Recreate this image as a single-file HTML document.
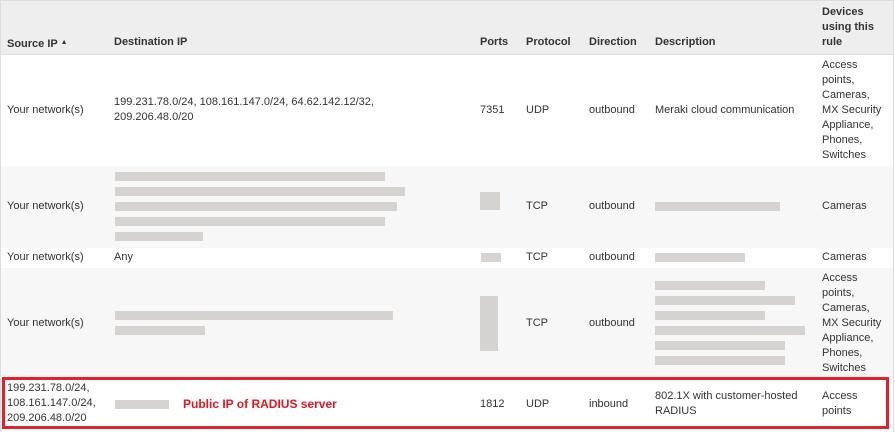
<!DOCTYPE html>
<html><head><style>
body{margin:0;width:895px;height:432px;background:#fff;font-family:"Liberation Sans",Arial,sans-serif;font-size:11px;color:#333;position:relative;overflow:hidden}
.a{position:absolute;line-height:15px;white-space:nowrap}
.h{font-weight:bold}
.bg{position:absolute;left:0;width:893px}
.b{position:absolute;height:9px;background:#cfcbc9;opacity:.85}
</style></head><body>
<div class="bg" style="top:0;height:55px;background:#eee;border-top:1px solid #ddd;border-bottom:1px solid #ddd;box-sizing:border-box"></div>
<div class="bg" style="top:166px;height:82px;background:#f7f7f7"></div>
<div class="bg" style="top:268px;height:109px;background:#f7f7f7"></div>
<div style="position:absolute;left:0;top:0;width:1px;height:432px;background:#ddd"></div>
<div style="position:absolute;left:893px;top:0;width:1px;height:432px;background:#ddd"></div>

<div class="a h" style="left:7px;top:35px">Source IP <span style="font-size:7px;vertical-align:3px">▲</span></div>
<div class="a h" style="left:114px;top:35px">Destination IP</div>
<div class="a h" style="left:480px;top:35px">Ports</div>
<div class="a h" style="left:526px;top:35px">Protocol</div>
<div class="a h" style="left:589px;top:35px">Direction</div>
<div class="a h" style="left:655px;top:35px">Description</div>
<div class="a h" style="left:822px;top:5px">Devices<br>using this<br>rule</div>

<div class="a" style="left:7px;top:103px">Your network(s)</div>
<div class="a" style="left:114px;top:95px">199.231.78.0/24, 108.161.147.0/24, 64.62.142.12/32,<br>209.206.48.0/20</div>
<div class="a" style="left:480px;top:103px">7351</div>
<div class="a" style="left:526px;top:103px">UDP</div>
<div class="a" style="left:589px;top:103px">outbound</div>
<div class="a" style="left:655px;top:103px">Meraki cloud communication</div>
<div class="a" style="left:822px;top:58px">Access<br>points,<br>Cameras,<br>MX Security<br>Appliance,<br>Phones,<br>Switches</div>

<div class="a" style="left:7px;top:199px">Your network(s)</div>
<div class="b" style="left:115px;top:172px;width:270px"></div>
<div class="b" style="left:115px;top:187px;width:290px"></div>
<div class="b" style="left:115px;top:202px;width:282px"></div>
<div class="b" style="left:115px;top:217px;width:270px"></div>
<div class="b" style="left:115px;top:232px;width:88px"></div>
<div class="b" style="left:480px;top:192px;width:20px;height:18px"></div>
<div class="a" style="left:526px;top:199px">TCP</div>
<div class="a" style="left:589px;top:199px">outbound</div>
<div class="b" style="left:655px;top:202px;width:125px"></div>
<div class="a" style="left:822px;top:199px">Cameras</div>

<div class="a" style="left:7px;top:250px">Your network(s)</div>
<div class="a" style="left:114px;top:250px">Any</div>
<div class="b" style="left:481px;top:253px;width:20px"></div>
<div class="a" style="left:526px;top:250px">TCP</div>
<div class="a" style="left:589px;top:250px">outbound</div>
<div class="b" style="left:655px;top:253px;width:90px"></div>
<div class="a" style="left:822px;top:250px">Cameras</div>

<div class="a" style="left:7px;top:316px">Your network(s)</div>
<div class="b" style="left:115px;top:311px;width:278px"></div>
<div class="b" style="left:115px;top:326px;width:90px"></div>
<div class="b" style="left:480px;top:296px;width:18px;height:55px"></div>
<div class="a" style="left:526px;top:316px">TCP</div>
<div class="a" style="left:589px;top:316px">outbound</div>
<div class="b" style="left:655px;top:281px;width:110px"></div>
<div class="b" style="left:655px;top:296px;width:140px"></div>
<div class="b" style="left:655px;top:311px;width:110px"></div>
<div class="b" style="left:655px;top:326px;width:150px"></div>
<div class="b" style="left:655px;top:341px;width:130px"></div>
<div class="b" style="left:655px;top:356px;width:130px"></div>
<div class="a" style="left:822px;top:271px">Access<br>points,<br>Cameras,<br>MX Security<br>Appliance,<br>Phones,<br>Switches</div>

<div style="position:absolute;left:2px;top:377px;width:881px;height:46px;border:3px solid #e3202b"></div>
<div class="a" style="left:7px;top:381px">199.231.78.0/24,<br>108.161.147.0/24,<br>209.206.48.0/20</div>
<div class="b" style="left:115px;top:400px;width:54px"></div>
<div class="a" style="left:183px;top:397px;color:#e8141e;font-weight:bold;font-size:12px">Public IP of RADIUS server</div>
<div class="a" style="left:480px;top:397px">1812</div>
<div class="a" style="left:526px;top:397px">UDP</div>
<div class="a" style="left:589px;top:397px">inbound</div>
<div class="a" style="left:655px;top:389px">802.1X with customer-hosted<br>RADIUS</div>
<div class="a" style="left:822px;top:389px">Access<br>points</div>
</body></html>
